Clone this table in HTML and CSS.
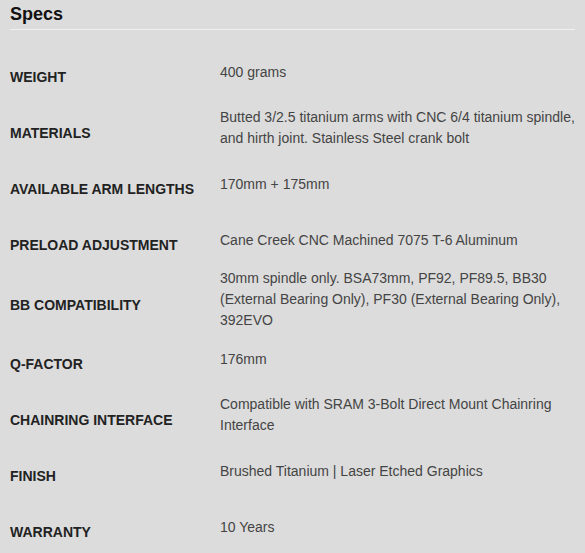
FILE: index.html
```html
<!DOCTYPE html>
<html lang="en">
<head>
<meta charset="utf-8">
<title>Specs</title>
<link rel="stylesheet" href="styles.css">
</head>
<body>
<section class="specs">
  <h2 class="specs-title">Specs</h2>
  <dl class="spec-list">
    <div class="spec-row"><dt class="spec-label">Weight</dt><dd class="spec-value">400 grams</dd></div>
    <div class="spec-row"><dt class="spec-label">Materials</dt><dd class="spec-value">Butted 3/2.5 titanium arms with CNC 6/4 titanium spindle, and hirth joint. Stainless Steel crank bolt</dd></div>
    <div class="spec-row"><dt class="spec-label">Available Arm Lengths</dt><dd class="spec-value">170mm + 175mm</dd></div>
    <div class="spec-row"><dt class="spec-label">Preload Adjustment</dt><dd class="spec-value">Cane Creek CNC Machined 7075 T-6 Aluminum</dd></div>
    <div class="spec-row"><dt class="spec-label">BB Compatibility</dt><dd class="spec-value">30mm spindle only. BSA73mm, PF92, PF89.5, BB30 (External Bearing Only), PF30 (External Bearing Only), 392EVO</dd></div>
    <div class="spec-row"><dt class="spec-label">Q-Factor</dt><dd class="spec-value">176mm</dd></div>
    <div class="spec-row"><dt class="spec-label">Chainring Interface</dt><dd class="spec-value">Compatible with SRAM 3-Bolt Direct Mount Chainring Interface</dd></div>
    <div class="spec-row"><dt class="spec-label">Finish</dt><dd class="spec-value">Brushed Titanium | Laser Etched Graphics</dd></div>
    <div class="spec-row"><dt class="spec-label">Warranty</dt><dd class="spec-value">10 Years</dd></div>
  </dl>
</section>
</body>
</html>
```
FILE: styles.css
```css
html, body {
  margin: 0;
  padding: 0;
  background: #dcdcdc;
}
body {
  font-family: "Liberation Sans", Arial, sans-serif;
}
.specs {
  padding: 0 10px;
}
.specs-title {
  margin: 0;
  padding: 3px 0 4px;
  font-size: 18px;
  line-height: 22px;
  font-weight: bold;
  color: #111;
  border-bottom: 1px solid #f0f0f0;
}
.spec-list {
  margin: 14px 0 0;
  padding: 0;
}
.spec-row {
  display: flex;
  align-items: center;
  min-height: 56px;
}
.spec-label {
  flex: 0 0 210px;
  padding-top: 10px;
  font-size: 14px;
  line-height: 18px;
  font-weight: bold;
  text-transform: uppercase;
  color: #222;
}
.spec-value {
  flex: 1 1 auto;
  margin: 0;
  font-size: 14px;
  line-height: 21px;
  color: #444;
}
```
